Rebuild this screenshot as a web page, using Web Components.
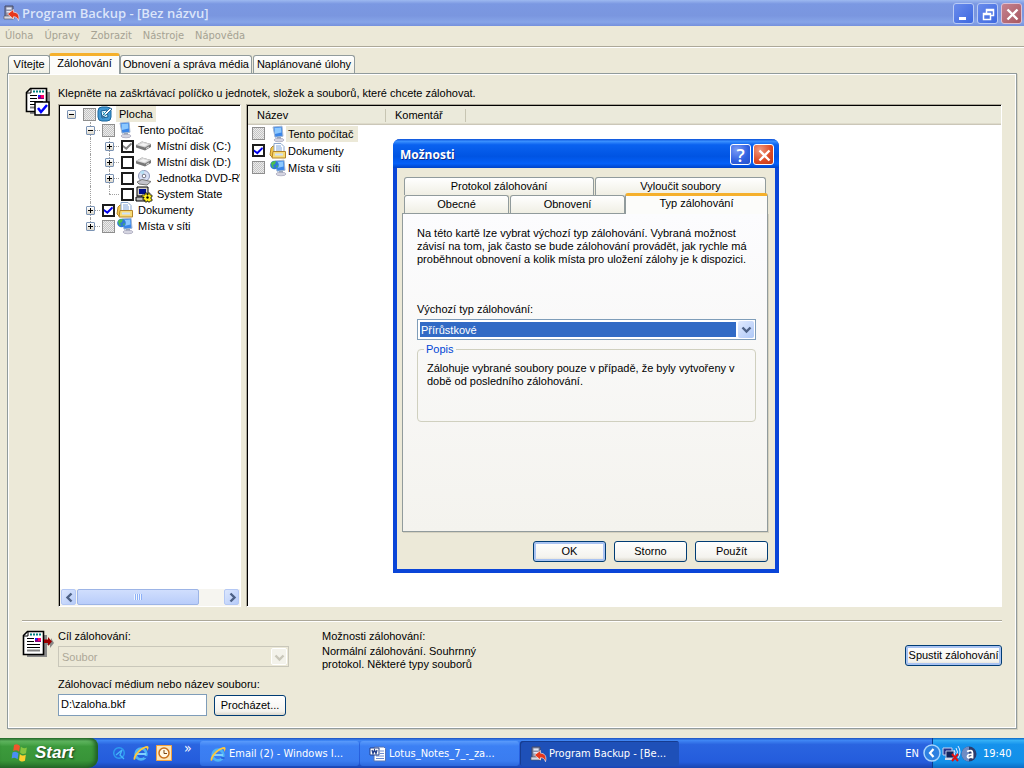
<!DOCTYPE html>
<html lang="cs">
<head>
<meta charset="utf-8">
<title>Program Backup - [Bez názvu]</title>
<style>
  html, body { margin: 0; height: 100%; }
  body { background: #ece9d8; font: 11px/13px "Liberation Sans", Arial, sans-serif; color: #000; overflow: hidden; }
</style>
</head>
<body>
<backup-desktop></backup-desktop>
<script>
const define = (name, css, html, setup) => {
  const t = document.createElement('template');
  t.innerHTML = `<style>*{box-sizing:border-box}${css}</style>${html}`;
  customElements.define(name, class extends HTMLElement {
    constructor() {
      super();
      this.attachShadow({ mode: 'open' }).append(t.content.cloneNode(true));
    }
    connectedCallback() { if (setup) setup.call(this, this.shadowRoot); }
  });
};

/* ---------- icons ---------- */
const page = `<path d="M5 5h20v22H5z" fill="#8a8a8a"/>
  <path d="M1.500 5.500L5.500 1.500H21.500V24.500H1.500Z" fill="#fff" stroke="#000" stroke-width="1.600"/>
  <path d="M2 6h4V2" fill="none" stroke="#000"/>
  <path d="M8 4.500h11" stroke="#008080" stroke-width="2" stroke-dasharray="2 1"/>
  <path d="M5 8.500h7M5 11.500h7M5 14.500h13M5 17.500h13" stroke="#000"/><path d="M5 20.500h13" stroke="#808080" stroke-width="2"/>
  <path d="M13 8h6v4h-6z" fill="#800080"/><path d="M16 8h3v3h-3z" fill="#f06"/><path d="M13 8h2v2h-2z" fill="#22f"/>`;
const folder = `<path d="M1 5l2-2 3 0v11H2L0 12z" fill="#f3c64c" stroke="#b5852a"/>
  <path d="M4 .500h7l3 3V11H4z" fill="#fff" stroke="#8aa6cc"/><path d="M6 3h5M6 5h6M6 7h6" stroke="#7fa4dc"/>
  <path d="M3 8.500h12.500v6.500H2z" fill="#f8dc78" stroke="#b5852a"/><path d="M5 10.500h8v2H5z" fill="#cfe2fb"/>`;
const monitor = `<path d="M3 1l9-.800 1 10-8 1z" fill="#3b86e8" stroke="#a4b6d0"/><path d="M4.500 2l6.500-.500.500 5-6.500 1.500z" fill="#8cc8ff"/>
  <path d="M7 11h4v2H7z" fill="#9aa9bb"/><ellipse cx="9" cy="14" rx="5" ry="1.800" fill="#d4d4e0" stroke="#9a98b0" stroke-width=".6"/>`;
const disk = `<path d="M0 7l6-3.500 9 2.500v3l-6 3.500-9-3z" fill="#777"/><path d="M0 7l6-3.500 9 2.500-6 3.600z" fill="#d4d4d4"/>
  <path d="M3 7l4-2 5 1.500-3.500 1.800z" fill="#f2f2f2"/><path d="M10 10.500l3-1.500" stroke="#ddd"/>`;
const backup = `<path d="M2 1h8v12H2z" fill="#8a8fa8" stroke="#444a68"/><path d="M3.500 2.500h5v2h-5zM3.500 6h5v1.500h-5z" fill="#e4e8f4"/><path d="M1 11h10v3H1z" fill="#d8d8e4" stroke="#555" stroke-width=".6"/>
  <path d="M4.500 9l6-4.500v2.700c4 0 6.500 3 5 8.500-1-3-2.500-4-5-4V14z" fill="#e8381c" stroke="#fff" stroke-width=".6"/>`;
const ie = `<circle cx="8" cy="9" r="5.300" fill="none" stroke="#4fb4f5" stroke-width="2.800"/><path d="M4 9h9" stroke="#7fd0ff" stroke-width="2"/>
  <path d="M10.500 11h4v2h-3z" fill="#2a66e0"/><path d="M1 15C-1 11 7 2 14 1c3 0 1 4 0 5 .500-2 0-3-1-3C8 4 2 11 2.500 14z" fill="#ffc83a"/>`;
const ICONS = {
  check: [26, 29, page + `<path d="M10 15h14v13H10z" fill="#fff" stroke="#000" stroke-width="1.500"/><path d="M13 21l3 4 6-7" fill="none" stroke="#00f" stroke-width="2.500"/>`],
  target: [32, 29, page + `<path d="M24 11h5V8l3 5-4 5v-3h-4z" fill="#888"/><path d="M22 9.500h4V7l4 4.500-4 4.500v-3h-4z" fill="#900"/>`],
  desktop: [16, 16, `<rect x="1" y="1" width="13" height="14" rx="4" fill="#4298d4" stroke="#19679e"/><path d="M4 5l6-1 1 7-6 1z" fill="#e8f8ff" stroke="#135c92"/><path d="M6 9l7-7 2 1-7 7-3 1z" fill="#fff" stroke="#2b6796"/><path d="M6 6l3 4" stroke="#18a0c8"/>`],
  computer: [16, 16, monitor],
  disk: [16, 16, disk],
  dvd: [16, 16, `<circle cx="8" cy="6" r="5.500" fill="#d8dff4" stroke="#8d96b8"/><path d="M8 6L4 2.500a5 5 0 0 1 4-2z" fill="#b5e0f4"/><circle cx="8" cy="6" r="1.800" fill="#fff" stroke="#778"/><path d="M1 12l5-2.500 9 2-4 3.500-8-1z" fill="#c4c4cc" stroke="#777"/>`],
  state: [16, 16, `<path d="M1 1h11v9H1z" fill="#d4d0c8" stroke="#000"/><path d="M3 3h7v5H3z" fill="#00108c"/><path d="M0 11h11v4H0z" fill="#bbb" stroke="#000"/><path d="M6 9h3V7h2v2h1V7h2v2h2v2h-1v2h1v2h-2v1h-2v-1h-1v1H9v-2H7v-2h1v-1H6z" fill="#ffee1c" stroke="#000" stroke-width=".7"/><circle cx="11.500" cy="11.500" r="1.200"/>`],
  folder: [16, 16, folder],
  network: [16, 16, `<g transform="translate(2 0)">${monitor}</g><circle cx="4.500" cy="5" r="4.300" fill="#2f78d8"/><path d="M1 3c2-2 4-2 5-2l-1 3-2 1 1 3-2-1zM6 6l2-1-1 3z" fill="#4cc04c"/>`],
  backup: [16, 16, backup],
  ie: [16, 16, ie],
  search: [14, 14, `<circle cx="7" cy="7" r="5.300" fill="none" stroke="#2e9cf0" stroke-width="1.500"/><path d="M4 9l6-5-2 5 4 4" fill="none" stroke="#45b8fa" stroke-width="1.300"/>`],
  outlook: [16, 16, `<path d="M.500.500h15v15H.500z" fill="#fce6b8" stroke="#f4a23c"/><circle cx="8" cy="8" r="5" fill="#fff8e4" stroke="#c9701c" stroke-width="1.500"/><path d="M8 5v3.500h3" fill="none" stroke="#7a4410"/>`],
  word: [16, 16, `<path d="M4 1h10l1.500 1.500V15H4z" fill="#fff" stroke="#5574b4"/><path d="M10 5h4M10 7.500h4M6 10h8M6 12.500h8" stroke="#6a8ad0"/><path d="M0 2h9v7H0z" fill="#fff" stroke="#24408c"/><path d="M2 4l1 3.500L4.500 4 6 7.500 7 4" fill="none" stroke="#24408c" stroke-width="1.300"/>`],
  flag: [20, 20, `<g transform="rotate(8 10 10)"><path d="M3 3c2-1.500 4-1.500 6 0v6C7 7.600 5 7.600 3 9z" fill="#f0562c"/><path d="M10 3.500c2 1.500 4 1.500 6 0v6c-2 1.500-4 1.500-6 0z" fill="#86c540"/><path d="M2.500 10.500c2-1.500 4-1.500 6 0v6c-2-1.500-4-1.500-6 0z" fill="#4a8ef4"/><path d="M10 11c2 1.500 4 1.500 6 0v6c-2 1.500-4 1.500-6 0z" fill="#fccf2e"/></g>`],
  net: [18, 18, `<path d="M1 3h9v7H1z" fill="#28368c" stroke="#c8d4f0"/><path d="M4 6h8v7H4z" fill="#10245c" stroke="#b8c4e0"/><path d="M3 14h7" stroke="#d0d8e8" stroke-width="2"/><path d="M12 5q2 2 0 5M14 3q3 4 0 8M16 1q4 6 0 12" fill="none" stroke="#e0ecff"/><path d="M10 9l6 7M16 9l-6 7" stroke="#e01010" stroke-width="2"/>`],
  avast: [16, 16, `<circle cx="8" cy="8" r="7.500" fill="#2c3c6c"/><path d="M8 .500a7.500 7.500 0 0 0 0 15z" fill="#6f8cc4"/><path d="M6 5.500q5.500-2.500 5.500 1.500v5.500M11 8.500q-4.500-.500-4.500 2t4.500 0" fill="none" stroke="#fff" stroke-width="1.800"/>`],
  back: [18, 18, `<circle cx="9" cy="9" r="8" fill="#2c80e0" stroke="#a8d4fc" stroke-width="1.500"/><path d="M10.500 5L7 9l3.500 4" fill="none" stroke="#fff" stroke-width="2.200"/>`],
  min: [21, 21, `<path d="M5 13h7v3H5z" fill="#fff"/>`],
  restore: [21, 21, `<path d="M8.500 9V5.500h7v6H13M8 6.500h8M5.500 9.500h7v6h-7zM5 10.500h8" fill="none" stroke="#fff" stroke-width="1.500"/>`],
  close: [21, 21, `<path d="M5.500 5.500l10 10M15.500 5.500l-10 10" stroke="#fff" stroke-width="2.400"/>`],
  down: [15, 17, `<path d="M3.500 6.500l4 4 4-4" fill="none" stroke="currentColor" stroke-width="2.400"/>`],
  left: [15, 15, `<path d="M9.500 3.500l-4 4 4 4" fill="none" stroke="#4d6185" stroke-width="2.400"/>`],
  right: [15, 15, `<path d="M5.500 3.500l4 4-4 4" fill="none" stroke="#4d6185" stroke-width="2.400"/>`]
};
define('xp-icon', `:host{display:block;flex:none} svg{display:block;overflow:visible}`, `<div></div>`, function (r) {
  const [w, h, body] = ICONS[this.getAttribute('name')];
  r.querySelector('div').innerHTML = `<svg width="${w}" height="${h}" viewBox="0 0 ${w} ${h}" aria-hidden="true">${body}</svg>`;
});

/* ---------- basic controls ---------- */
define('xp-button', `:host{display:block}
  button{display:block;width:100%;height:21px;padding:0 2px;border:1px solid #003c74;border-radius:3px;font:inherit;color:#000;white-space:nowrap;
    background:linear-gradient(#fff,#f4f3ee 80%,#dcd8cc)}
  :host([default]) button{box-shadow:inset 0 0 0 2px #a9c3f2}`,
  `<button type="button"><slot></slot></button>`);

define('caption-button', `:host{display:block}
  button{display:grid;place-items:center;width:21px;height:21px;padding:0;border:1px solid #fff;border-radius:3px;color:#fff;
    background:radial-gradient(circle at 30% 25%,#7a9bf5,#2f5fe0 60%,#2450c8);font:600 18px/18px "Open Sans",sans-serif}
  :host([kind=close]) button{background:radial-gradient(circle at 30% 25%,#f09a80,#dc4a24 60%,#c03a18)}
  :host([muted]) button{border-color:#b9cbf5;background:linear-gradient(135deg,#6a8cec,#3d68e0)}
  :host([muted][kind=close]) button{border-color:#dcc0d4;background:linear-gradient(135deg,#c58290,#a85860)}`,
  `<button type="button"><slot></slot></button>`, function (r) {
    r.querySelector('button').setAttribute('aria-label', this.getAttribute('label'));
  });

define('xp-check', `:host{display:block;flex:none;width:13px;height:13px}
  input{appearance:none;display:block;position:relative;width:13px;height:13px;margin:0;border:2px solid #1c1c1c;background:#fff}
  input:checked::after{content:"";display:block;width:9px;height:9px;background:#00e;clip-path:polygon(0 40%,35% 65%,90% 10%,100% 30%,38% 95%,0 65%)}
  :host([grey]) input::after{background:#808080}
  :host([mixed]) input{border:1px solid #8e8e8e;background:repeating-conic-gradient(#c4c4c4 0 25%,#ececec 0 50%) 0 0/2px 2px}`,
  `<input type="checkbox">`, function (r) {
    const i = r.querySelector('input');
    i.checked = this.hasAttribute('checked');
    i.setAttribute('aria-label', this.getAttribute('label'));
  });

define('xp-combo', `:host{display:block}
  label{display:block;height:16px}
  .box{display:grid}
  .box>*{grid-area:1/1}
  select{appearance:none;width:100%;height:21px;border:1px solid #7f9db9;border-radius:0;padding:1px 20px 0 3px;font:inherit;color:#fff;opacity:1;
    background:linear-gradient(#316ac5,#316ac5) 2px 2px/calc(100% - 21px) calc(100% - 4px) no-repeat #fff}
  option{color:#000;background:#fff}
  .arrow{justify-self:end;align-self:center;margin-right:2px;pointer-events:none;display:grid;place-items:center;width:16px;height:17px;border-radius:2px;background:linear-gradient(135deg,#e1eafe,#aec8f7);color:#4d6185}
  select:disabled{border-color:#c9c7ba;background:#ece9d8;color:#aca899}
  :host([disabled]) .arrow{background:#f3f2ea;border:1px solid #fff;color:#c9c7ba}`,
  `<label for="s"><slot></slot></label><div class="box"><select id="s"></select><span class="arrow"><xp-icon name="down"></xp-icon></span></div>`,
  function (r) {
    const s = r.querySelector('select');
    s.innerHTML = `<option>${this.getAttribute('value')}</option>`;
    s.disabled = this.hasAttribute('disabled');
  });

define('xp-tab', `:host{display:block}
  button{display:block;width:100%;height:18px;padding:0;border:1px solid #919b9c;border-bottom:0;border-radius:3px 3px 0 0;background:linear-gradient(#fff,#f0efe4);font:inherit;color:#000;white-space:nowrap}
  :host([active]){position:relative;margin-bottom:-1px}
  :host([active]) button{height:21px;border-top:3px solid #f5b02c;padding-bottom:3px;background:#fcfcfa}`,
  `<button type="button" role="tab"><slot></slot></button>`);

/* ---------- tree and list ---------- */
/* guides: one cell per level, "lines/expander"; the lines are v (vertical), h (to the box), end (last child). */
define('tree-row', `:host{display:flex;align-items:center;height:16px;padding-left:2px;white-space:nowrap}
  .cell{position:relative;flex:none;width:19px;height:16px;display:grid;place-items:center}
  .v::before{content:"";position:absolute;left:9px;top:0;bottom:0;border-left:1px dotted #a0a0a0}
  .v.end::before{bottom:8px}
  .h::after{content:"";position:absolute;left:9px;right:0;top:8px;border-top:1px dotted #a0a0a0}
  .exp{position:relative;z-index:1;width:9px;height:9px;border:1px solid #7b93b4;border-radius:1px;
    background:linear-gradient(#000,#000) 1px 3px/5px 1px no-repeat,linear-gradient(#fff,#ddd8cc)}
  .exp.plus{background:linear-gradient(#000,#000) 1px 3px/5px 1px no-repeat,linear-gradient(#000,#000) 3px 1px/1px 5px no-repeat,linear-gradient(#fff,#ddd8cc)}
  .lead{display:flex}
  xp-check{margin:0 1px 0 2px}
  .text{margin-left:3px;padding:0 3px;line-height:16px}
  :host([level="1"]) .text,:host([level="2"]) .text{margin-left:2px}
  :host([level="1"]) xp-check,:host([level="2"]) xp-check{margin-right:2px}
  :host([current]) .text{background:#ece9d8}`,
  `<div class="lead"></div><span class="text"><slot></slot></span>`,
  function (r) {
    r.querySelector('.lead').innerHTML = this.getAttribute('guides').split(' ').map(g => {
      const [lines, exp] = g.split('/');
      return `<span class="cell ${lines.replace(/-/g, ' ')}">${exp ? `<span class="exp ${exp}"></span>` : ''}</span>`;
    }).join('');
    const check = document.createElement('xp-check');
    this.getAttribute('state').split(' ').filter(Boolean).forEach(s => check.setAttribute(s, ''));
    check.setAttribute('label', this.textContent);
    const icon = document.createElement('xp-icon');
    icon.setAttribute('name', this.getAttribute('icon'));
    r.querySelector('.text').before(check, icon);
  });

define('tree-view', `:host{display:flex;flex-direction:column;overflow:hidden;min-width:0;border:1px solid #aca899;border-color:#aca899 #fff #fff #aca899;background:#fff;box-shadow:inset 1px 1px #000;padding:1px 0 0 1px}
  .rows{flex:1;overflow:hidden}
  .bar{display:flex;height:17px;background:#f6f5f0;gap:1px;padding:0 1px}
  .bar button{width:15px;height:16px;padding:0;border:1px solid #b4c8f4;border-radius:2px;background:linear-gradient(135deg,#dce7fe,#b6cbf8);display:grid;place-items:center}
  .track{flex:1;display:flex}
  .thumb{width:122px;height:16px;border:1px solid #9cb4e6;border-radius:2px;background:linear-gradient(#d0defd,#b9cdfa);display:grid;place-items:center}
  .grip{width:8px;height:6px;background:repeating-linear-gradient(90deg,#eef4fe 0 1px,#8cb0f8 1px 2px)}`,
  `<div class="rows">
    <tree-row level="0" icon="desktop" state="mixed" guides="n/minus" current>Plocha</tree-row>
    <tree-row level="1" icon="computer" state="mixed" guides="n v-h/minus">Tento počítač</tree-row>
    <tree-row level="2" icon="disk" state="checked grey" guides="n v v-h/plus">Místní disk (C:)</tree-row>
    <tree-row level="2" icon="disk" state="" guides="n v v-h/plus">Místní disk (D:)</tree-row>
    <tree-row level="2" icon="dvd" state="" guides="n v v-h/plus">Jednotka DVD-RW</tree-row>
    <tree-row level="2" icon="state" state="" guides="n v v-h-end">System State</tree-row>
    <tree-row level="1" icon="folder" state="checked" guides="n v-h/plus">Dokumenty</tree-row>
    <tree-row level="1" icon="network" state="mixed" guides="n v-end-h/plus">Místa v síti</tree-row>
   </div>
   <div class="bar"><button type="button" aria-label="Vlevo"><xp-icon name="left"></xp-icon></button><div class="track"><div class="thumb"><span class="grip"></span></div></div><button type="button" aria-label="Vpravo"><xp-icon name="right"></xp-icon></button></div>`);

define('file-list', `:host{display:block;overflow:hidden;min-width:0;border:1px solid #aca899;border-color:#aca899 #fff #fff #aca899;background:#fff;box-shadow:inset 1px 1px #000;padding:1px 0 0 1px}
  table{width:100%;table-layout:fixed;border-collapse:separate;border-spacing:0}
  .c1{width:138px}.c2{width:80px}
  th{height:19px;padding:0 9px;font-weight:normal;text-align:left;background:#ebeadb;border-bottom:1px solid #cbc7b8;box-shadow:inset 0 -1px #dedbcb;background-image:linear-gradient(#c7c5b2,#c7c5b2);background-size:1px 13px;background-repeat:no-repeat;background-position:right 3px}
  th:last-child{background-image:none}
  td{padding:0;height:17px}
  .item{display:flex;align-items:center;height:17px;padding-left:4px;white-space:nowrap}
  xp-icon{margin-left:5px}
  .text{padding:0 5px 0 2px;line-height:16px}
  .sel{background:#ece9d8}`,
  `<table><colgroup><col class="c1"><col class="c2"><col></colgroup>
   <thead><tr><th>Název</th><th>Komentář</th><th></th></tr></thead>
   <tbody>
    <tr><td><div class="item"><xp-check mixed label="Tento počítač"></xp-check><xp-icon name="computer"></xp-icon><span class="text sel">Tento počítač</span></div></td><td></td><td></td></tr>
    <tr><td><div class="item"><xp-check checked label="Dokumenty"></xp-check><xp-icon name="folder"></xp-icon><span class="text">Dokumenty</span></div></td><td></td><td></td></tr>
    <tr><td><div class="item"><xp-check mixed label="Místa v síti"></xp-check><xp-icon name="network"></xp-icon><span class="text">Místa v síti</span></div></td><td></td><td></td></tr>
   </tbody></table>`);

/* ---------- main window ---------- */
define('title-bar', `:host{display:flex;align-items:center;gap:3px;height:26px;padding:0 2px 0 3px;background:linear-gradient(#9db9f0,#7b98e2 15%,#7a96df 60%,#86a4e8 85%,#7590dc)}
  h1{flex:1;margin:0;font:600 13px/20px "Open Sans","Noto Sans",sans-serif;color:#dbe5fa;padding-bottom:1px}`,
  `<xp-icon name="backup"></xp-icon><h1><slot></slot></h1>
   <caption-button muted label="Minimalizovat"><xp-icon name="min"></xp-icon></caption-button>
   <caption-button muted label="Obnovit"><xp-icon name="restore"></xp-icon></caption-button>
   <caption-button muted kind="close" label="Zavřít"><xp-icon name="close"></xp-icon></caption-button>`);

define('menu-bar', `:host{display:block;border-bottom:1px solid #fff}
  nav{display:flex;gap:11px;height:21px;padding:3px 5px 0;border-bottom:1px solid #aca899;font:11px/13px "DejaVu Sans Condensed","DejaVu Sans",sans-serif}
  a{color:#a5a293;text-decoration:none}`,
  `<nav><a href="#">Úloha</a><a href="#">Úpravy</a><a href="#">Zobrazit</a><a href="#">Nástroje</a><a href="#">Nápověda</a></nav>`);

define('backup-target', `:host{display:grid;grid-template-columns:36px 231px 180px 1fr;border-top:1px solid #aca899;box-shadow:inset 0 1px #fff;padding:9px 0 12px}
  .path{display:grid;grid-template-columns:149px 72px;column-gap:7px;margin-top:11px;align-items:center}
  .path label{grid-column:1/3;height:16px}
  input{width:100%;height:22px;border:1px solid #7f9db9;padding:0 2px 3px;font:inherit;background:#fff;color:#000}
  .options{margin-left:33px;white-space:nowrap}
  p{margin:0}
  p+p{margin-top:2px}
  .start{justify-self:end;width:97px;padding-top:15px}`,
  `<xp-icon name="target"></xp-icon>
   <div><xp-combo disabled value="Soubor">Cíl zálohování:</xp-combo>
     <div class="path"><label for="p">Zálohovací médium nebo název souboru:</label><input id="p" value="D:\\zaloha.bkf"><xp-button>Procházet...</xp-button></div></div>
   <div class="options"><p>Možnosti zálohování:</p><p>Normální zálohování. Souhrnný<br>protokol. Některé typy souborů</p></div>
   <div class="start"><xp-button default>Spustit zálohování</xp-button></div>`);

define('backup-window', `:host{display:flex;flex-direction:column;flex:1;min-height:0}
  .tabs{display:flex;align-items:flex-end;height:25px;padding:0 8px}
  .t1{width:42px}.t2{width:71px;margin-left:-1px}.t3{width:132px}.t4{width:102px;margin-left:1px}
  .panel{flex:1;min-height:0;display:flex;flex-direction:column;margin:0 7px 9px;border:1px solid #919b9c;box-shadow:inset 0 0 0 1px #fff,1px 1px #d5d1c0;padding:10px 14px 0}
  .main{flex:1;min-height:0;display:grid;grid-template-columns:36px 183px 1fr;grid-template-rows:20px 1fr;margin-bottom:13px}
  .side{grid-row:1/3;padding:3px 0 0 3px}
  .hint{grid-column:2/4;padding-top:3px}
  file-list{margin-left:5px}`,
  `<title-bar>Program Backup - [Bez názvu]</title-bar>
   <menu-bar></menu-bar>
   <div class="tabs" role="tablist"><xp-tab class="t1">Vítejte</xp-tab><xp-tab class="t2" active>Zálohování</xp-tab><xp-tab class="t3">Obnovení a správa média</xp-tab><xp-tab class="t4">Naplánované úlohy</xp-tab></div>
   <div class="panel">
     <div class="main"><div class="side"><xp-icon name="check"></xp-icon></div>
       <div class="hint">Klepněte na zaškrtávací políčko u jednotek, složek a souborů, které chcete zálohovat.</div>
       <tree-view></tree-view><file-list></file-list></div>
     <backup-target></backup-target>
   </div>`);

/* ---------- options dialog ---------- */
define('options-dialog', `:host{position:absolute;left:393px;top:139px;width:386px;display:block;background:#ece9d8;border:solid #0a45d8;border-width:0 4px 4px;border-radius:7px 7px 0 0}
  header{display:flex;align-items:center;gap:2px;height:29px;margin:0 -4px;padding:2px 5px 0 7px;border-radius:7px 7px 0 0;background:linear-gradient(#0a4fd8,#3a90ff 8%,#0a62f0 20%,#0054e3 60%,#0560f8 85%,#0043c8)}
  h2{flex:1;margin:0;font:bold 12px/20px "Open Sans","Noto Sans",sans-serif;color:#fff;text-shadow:1px 1px #0a2f90}
  .body{padding:9px 7px 7px 5px}
  .row{display:flex;gap:1px;margin:0 1px 0 2px}
  .row.front{align-items:flex-end;height:18px;margin-right:0;position:relative}
  .a{width:190px}.b{flex:1;margin-right:1px}.c{width:105px}.d{width:115px}.e{flex:1;margin-left:-1px}
  .page{height:319px;border:1px solid #919b9c;background:linear-gradient(#fcfcfe,#f4f3ee);padding:13px 11px 0 14px;box-shadow:1px 1px #d5d1c0}
  .page p{margin:0}
  xp-combo{margin-top:37px}
  .intro{white-space:nowrap}
  fieldset{margin:3px 0 0;height:79px;padding:6px 9px 0;border:1px solid #d0d0bf;border-radius:4px;min-width:0}
  legend{padding:0 2px;margin-left:-3px;color:#0046d5}
  .buttons{display:flex;justify-content:flex-end;gap:8px;margin-top:9px}
  .buttons xp-button{width:73px}`,
  `<header><h2>Možnosti</h2><caption-button label="Nápověda">?</caption-button><caption-button kind="close" label="Zavřít"><xp-icon name="close"></xp-icon></caption-button></header>
   <div class="body">
    <div class="row" role="tablist"><xp-tab class="a">Protokol zálohování</xp-tab><xp-tab class="b">Vyloučit soubory</xp-tab></div>
    <div class="row front" role="tablist"><xp-tab class="c">Obecné</xp-tab><xp-tab class="d">Obnovení</xp-tab><xp-tab class="e" active>Typ zálohování</xp-tab></div>
    <div class="page">
      <p class="intro">Na této kartě lze vybrat výchozí typ zálohování. Vybraná možnost<br>závisí na tom, jak často se bude zálohování provádět, jak rychle má<br>proběhnout obnovení a kolik místa pro uložení zálohy je k dispozici.</p>
      <xp-combo value="Přírůstkové">Výchozí typ zálohování:</xp-combo>
      <fieldset><legend>Popis</legend><p>Zálohuje vybrané soubory pouze v případě, že byly vytvořeny v<br>době od posledního zálohování.</p></fieldset>
    </div>
    <div class="buttons"><xp-button default>OK</xp-button><xp-button>Storno</xp-button><xp-button>Použít</xp-button></div>
   </div>`);

/* ---------- taskbar ---------- */
define('task-button', `:host{display:block;width:159px}
  button{display:flex;align-items:center;gap:3px;width:100%;height:25px;padding:0 10px;border:0;border-radius:3px;background:linear-gradient(#5a9bfb,#3c80f4 20%,#3a7cf0 80%,#2c68dc);color:#fff;font:inherit;white-space:nowrap}
  :host([active]) button{background:#1e50b8;box-shadow:inset 1px 1px #163c90}`,
  `<button type="button"><slot name="icon"></slot><span><slot></slot></span></button>`);

define('task-bar', `:host{display:flex;align-items:stretch;height:30px;background:linear-gradient(#1c50c0,#3f86f4 8%,#2a64e0 22%,#245cdc 80%,#1a44b0);color:#fff;font:11px/13px "DejaVu Sans Condensed","DejaVu Sans",sans-serif}
  .start{display:flex;align-items:center;gap:5px;width:98px;padding:0 0 1px 10px;border:0;border-radius:0 8px 10px 0;background:linear-gradient(#2c7430,#62b862 10%,#3c9a3c 28%,#389438 75%,#276f2a);box-shadow:inset -3px 0 4px #1f5c24;color:#fff;font:italic bold 17px/22px "Liberation Sans",Arial,sans-serif;text-shadow:1px 1px 2px #1a3c1a}
  .quick{display:flex;align-items:center;gap:7px;width:102px;padding-left:14px}
  .more{align-self:flex-start;padding:1px 0 0 5px;font-size:14px;line-height:18px}
  .tasks{flex:1;display:flex;gap:1px;align-items:center;padding-top:1px}
  .lang{align-self:center;padding:1px 4px 0 0}
  xp-icon.back{align-self:center;margin-right:-9px;position:relative}
  .tray{display:flex;align-items:center;gap:1px;width:92px;padding:1px 0 0 9px;background:linear-gradient(#0c66c4,#35b0f6 8%,#1592ec 22%,#1290e8 80%,#0c6cc4);border-left:1px solid #0a3c90}
  time{margin-left:5px}`,
  `<button type="button" class="start"><xp-icon name="flag"></xp-icon>Start</button>
   <div class="quick"><xp-icon name="search"></xp-icon><xp-icon name="ie"></xp-icon><xp-icon name="outlook"></xp-icon><span class="more">»</span></div>
   <div class="tasks"><task-button><xp-icon slot="icon" name="ie"></xp-icon>Email (2) - Windows I...</task-button><task-button><xp-icon slot="icon" name="word"></xp-icon>Lotus_Notes_7_-_za...</task-button><task-button active><xp-icon slot="icon" name="backup"></xp-icon>Program Backup - [Be...</task-button></div>
   <span class="lang">EN</span><xp-icon class="back" name="back"></xp-icon>
   <div class="tray"><xp-icon name="net"></xp-icon><xp-icon name="avast"></xp-icon><time>19:40</time></div>`);

define('backup-desktop', `:host{display:flex;flex-direction:column;height:100vh;position:relative}`,
  `<backup-window></backup-window><options-dialog></options-dialog><task-bar></task-bar>`);
</script>
</body>
</html>
